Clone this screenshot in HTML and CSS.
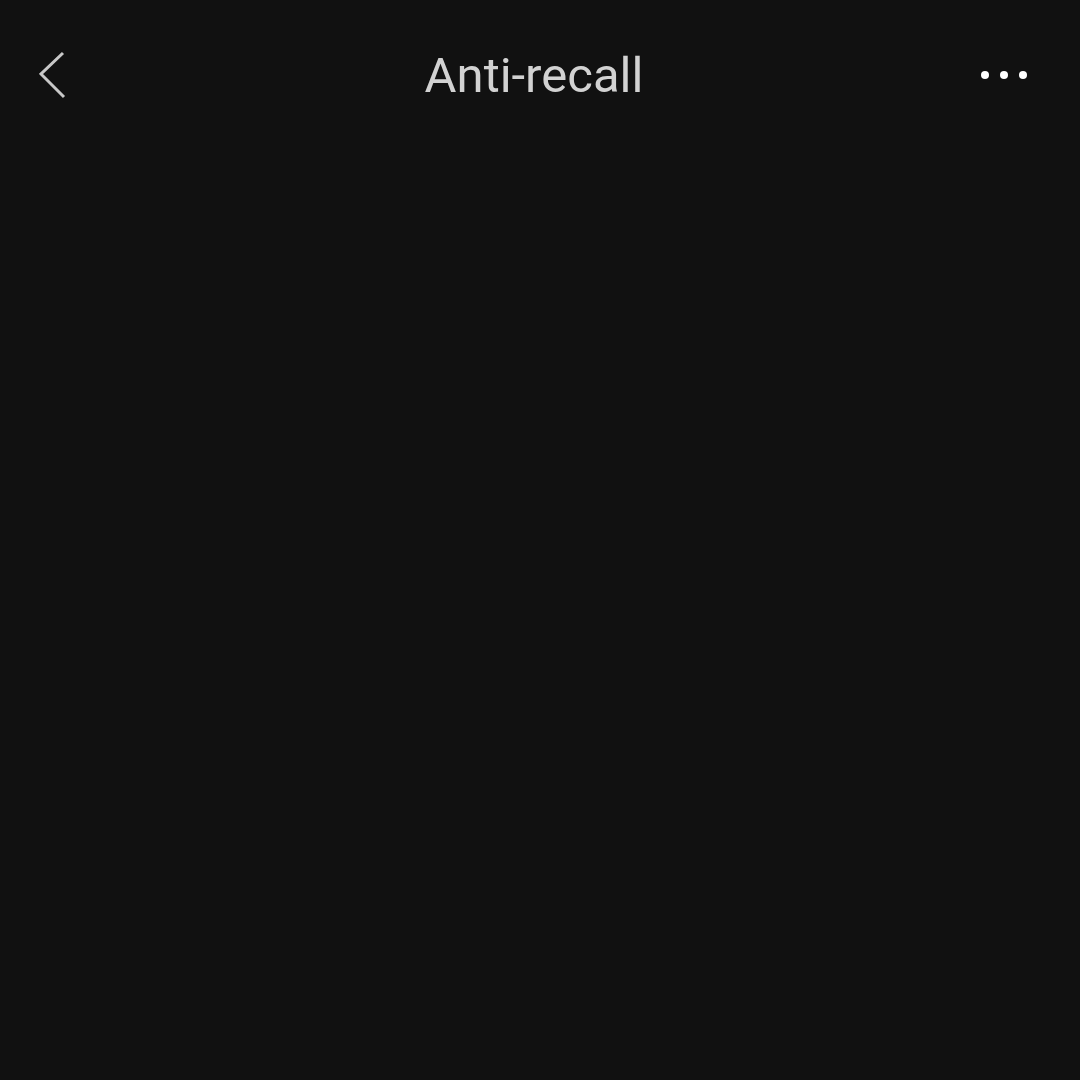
FILE: index.html
```html
<!DOCTYPE html>
<html>
<head>
<meta charset="utf-8">
<link rel="stylesheet" href="styles.css">
</head>
<body>
<header class="bar">
  <div class="back">
    <svg width="30" height="50" viewBox="0 0 30 50"><polyline points="24,3 2,24 25,47" fill="none" stroke="#c8c8c8" stroke-width="3"/></svg>
  </div>
  <h1 class="title">Anti-recall</h1>
  <div class="more"><span class="dot"></span><span class="dot"></span><span class="dot"></span></div>
</header>
<main class="content"></main>
</body>
</html>
```
FILE: styles.css
```css
html, body { margin: 0; padding: 0; background: #111111; }
body { width: 1080px; height: 1080px; font-family: Roboto, "Noto Sans", sans-serif; }
.bar { display: flex; align-items: center; justify-content: space-between; height: 150px; padding: 0 53px 0 39px; box-sizing: border-box; position: relative; }
.back { width: 30px; height: 50px; display: flex; }
.title { position: absolute; left: 0; right: 12px; text-align: center; margin: 0; font-size: 49px; font-weight: 400; color: #d2d2d2; pointer-events: none; }
.more { display: flex; gap: 11px; }
.dot { width: 8px; height: 8px; border-radius: 50%; background: #ffffff; }
```
